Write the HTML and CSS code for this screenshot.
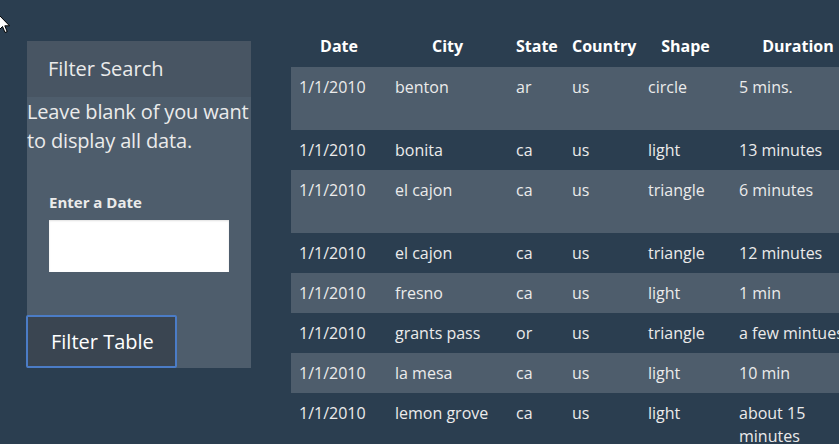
FILE: index.html
```html
<!DOCTYPE html>
<html lang="en">
<head>
<meta charset="utf-8">
<title>UFO Sightings</title>
<link rel="stylesheet" href="styles.css">
</head>
<body>
<svg class="cursor" width="12" height="20" viewBox="0 0 12 20"><path d="M0 0 L0 15 L3.5 11.5 L6 17.5 L8.2 16.6 L5.8 10.8 L10.5 10.8 Z" fill="#fff" stroke="#000" stroke-width="1"/></svg>
<div class="page">
  <aside class="panel">
    <div class="panel-heading">Filter Search</div>
    <div class="panel-body">
      <p class="lead">Leave blank of you want to display all data.</p>
      <form class="filter">
        <label for="datetime">Enter a Date</label>
        <input id="datetime" type="text">
        <button type="button" class="btn">Filter Table</button>
      </form>
    </div>
  </aside>
  <div class="table-wrap">
    <table class="ufo">
      <colgroup>
        <col class="c-date"><col class="c-city"><col class="c-state"><col class="c-country"><col class="c-shape"><col class="c-duration"><col class="c-comments">
      </colgroup>
      <thead>
        <tr><th>Date</th><th>City</th><th>State</th><th>Country</th><th>Shape</th><th>Duration</th><th></th></tr>
      </thead>
      <tbody>
        <tr class="tall"><td>1/1/2010</td><td>benton</td><td>ar</td><td>us</td><td>circle</td><td>5 mins.</td><td></td></tr>
        <tr><td>1/1/2010</td><td>bonita</td><td>ca</td><td>us</td><td>light</td><td>13 minutes</td><td></td></tr>
        <tr class="tall"><td>1/1/2010</td><td>el cajon</td><td>ca</td><td>us</td><td>triangle</td><td>6 minutes</td><td></td></tr>
        <tr><td>1/1/2010</td><td>el cajon</td><td>ca</td><td>us</td><td>triangle</td><td>12 minutes</td><td></td></tr>
        <tr><td>1/1/2010</td><td>fresno</td><td>ca</td><td>us</td><td>light</td><td>1 min</td><td></td></tr>
        <tr><td>1/1/2010</td><td>grants pass</td><td>or</td><td>us</td><td>triangle</td><td><span class="nowrap">a few mintues</span></td><td></td></tr>
        <tr><td>1/1/2010</td><td>la mesa</td><td>ca</td><td>us</td><td>light</td><td>10 min</td><td></td></tr>
        <tr><td>1/1/2010</td><td>lemon grove</td><td>ca</td><td>us</td><td>light</td><td>about 15 minutes</td><td></td></tr>
      </tbody>
    </table>
  </div>
</div>
</body>
</html>
```
FILE: styles.css
```css
html, body {
  margin: 0;
  padding: 0;
  overflow: hidden;
}
body {
  width: 839px;
  height: 444px;
  background: #2b3e50;
  color: #ebebeb;
  font-family: "Open Sans", "Noto Sans", "DejaVu Sans", sans-serif;
  position: relative;
}
.cursor {
  position: absolute;
  left: -1px;
  top: 15px;
  z-index: 5;
}
.page {
  display: flex;
  align-items: flex-start;
  gap: 40px;
  padding: 27px 0 0 27px;
}
.panel {
  flex: 0 0 224px;
  width: 224px;
  margin-top: 14px;
  background: #4e5d6c;
}
.panel-heading {
  height: 56px;
  padding-left: 21px;
  background: #485563;
  font-size: 20px;
  line-height: 56px;
  box-sizing: border-box;
}
.lead {
  margin: 0;
  font-size: 20px;
  line-height: 29px;
  letter-spacing: -0.15px;
}
.filter {
  display: flex;
  flex-direction: column;
  align-items: flex-start;
  padding-top: 36px;
}
.filter label {
  margin: 0 0 6px 22px;
  font-size: 15px;
  font-weight: 700;
  line-height: 23px;
}
.filter input {
  margin-left: 22px;
  width: 180px;
  height: 52px;
  border: 0;
  padding: 0 10px;
  box-sizing: border-box;
  background: #fff;
  box-shadow: inset 0 1px 2px rgba(0, 0, 0, 0.12);
  outline: none;
}
.btn {
  margin: 43px 0 0 -1px;
  width: 151px;
  height: 53px;
  box-sizing: border-box;
  border: 2px solid #4b7cc6;
  border-radius: 2px;
  background: #3a4551;
  color: #fff;
  font-family: inherit;
  font-size: 20px;
  text-align: left;
  padding: 0 0 0 23px;
}
.table-wrap {
  flex: 0 0 auto;
}
.ufo {
  border-collapse: collapse;
  table-layout: fixed;
  width: 774px;
  font-size: 16px;
  line-height: 23px;
}
.c-date { width: 96px; }
.c-city { width: 121px; }
.c-state { width: 56px; }
.c-country { width: 76px; }
.c-shape { width: 91px; }
.c-duration { width: 134px; }
.c-comments { width: 200px; }
.ufo th {
  padding: 8px;
  height: 40px;
  box-sizing: border-box;
  font-weight: 700;
  text-align: center;
  color: #fff;
  white-space: nowrap;
}
.ufo td {
  padding: 8px;
  border-top: 1px solid transparent;
  vertical-align: top;
  text-align: left;
}
.ufo tbody tr:nth-child(odd) {
  background: #4e5d6c;
}
.ufo tr.tall td {
  height: 46px;
}
.nowrap {
  white-space: nowrap;
}
```
